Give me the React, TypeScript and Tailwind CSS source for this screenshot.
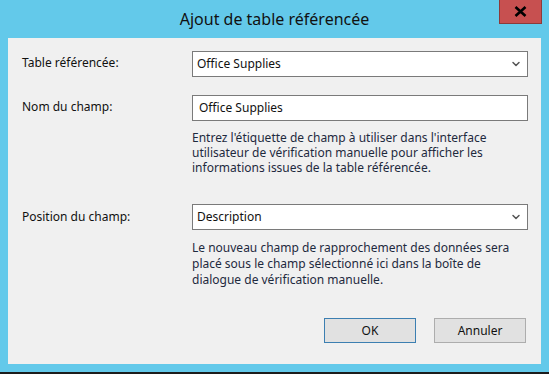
import { ChevronDown } from "lucide-react";

const font = { fontFamily: '"Noto Sans", "Open Sans", sans-serif' };

function Combo({ value }: { value: string }) {
  return (
    <div className="flex h-[26px] w-[336px] items-center justify-between border border-[#7a7a7a] bg-white pl-[4px] pr-[5px] text-[12px] text-[#111]">
      <span>{value}</span>
      <ChevronDown size={12} strokeWidth={3} className="text-[#555]" />
    </div>
  );
}

export default function App() {
  return (
    <div className="relative flex h-[374px] w-[549px] flex-col bg-[#63c9ea]" style={font}>
      {/* Title bar */}
      <div className="flex h-[38px] items-center justify-center pb-[1px] text-[16px] text-[#111]">
        Ajout de table référencée
      </div>
      <button
        type="button"
        className="absolute left-[499px] top-0 flex h-[24px] w-[43px] items-center justify-center border border-t-0 border-[#8c3a3a] bg-[#c75050] text-black"
      >
        <svg width="13" height="11" viewBox="0 0 13 11">
          <path d="M1.5 1 L11.5 10 M11.5 1 L1.5 10" stroke="#000" strokeWidth="2.6" />
        </svg>
      </button>

      {/* Client area */}
      <div className="mx-[8px] flex h-[326px] flex-col bg-[#f0f0f0] pl-[14px] pt-[13px] text-[12px] text-[#111]">
        <div className="flex items-center">
          <div className="w-[170px] -translate-y-[1px]">Table référencée:</div>
          <Combo value="Office Supplies" />
        </div>

        <div className="mt-[18px] flex items-center">
          <div className="w-[170px] -translate-y-[1px]">Nom du champ:</div>
          <div className="flex h-[26px] w-[336px] items-center border border-[#7a7a7a] bg-white pl-[6px]">
            Office Supplies
          </div>
        </div>

        <p className="ml-[170px] mt-[9px] w-[336px] leading-[15px] text-[#1e2a3e]">
          Entrez l'étiquette de champ à utiliser dans l'interface utilisateur de vérification manuelle pour afficher les informations issues de la table référencée.
        </p>

        <div className="mt-[29px] flex items-center">
          <div className="w-[170px]">Position du champ:</div>
          <Combo value="Description" />
        </div>

        <p className="ml-[170px] mt-[10px] w-[336px] leading-[16px] text-[#1e2a3e]">
          Le nouveau champ de rapprochement des données sera placé sous le champ sélectionné ici dans la boîte de dialogue de vérification manuelle.
        </p>

        <div className="mt-auto mb-[21px] mr-[15px] flex justify-end gap-[18px]">
          <button
            type="button"
            className="h-[25px] w-[92px] border border-[#3c7fb1] bg-[#e1e1e1] text-[12px] text-[#111]"
          >
            OK
          </button>
          <button
            type="button"
            className="h-[25px] w-[92px] border border-[#adadad] bg-[#e1e1e1] text-[12px] text-[#111]"
          >
            Annuler
          </button>
        </div>
      </div>

      <div className="flex-1" />
      <div className="h-[2px] bg-[#1c1c1c]" />
    </div>
  );
}
